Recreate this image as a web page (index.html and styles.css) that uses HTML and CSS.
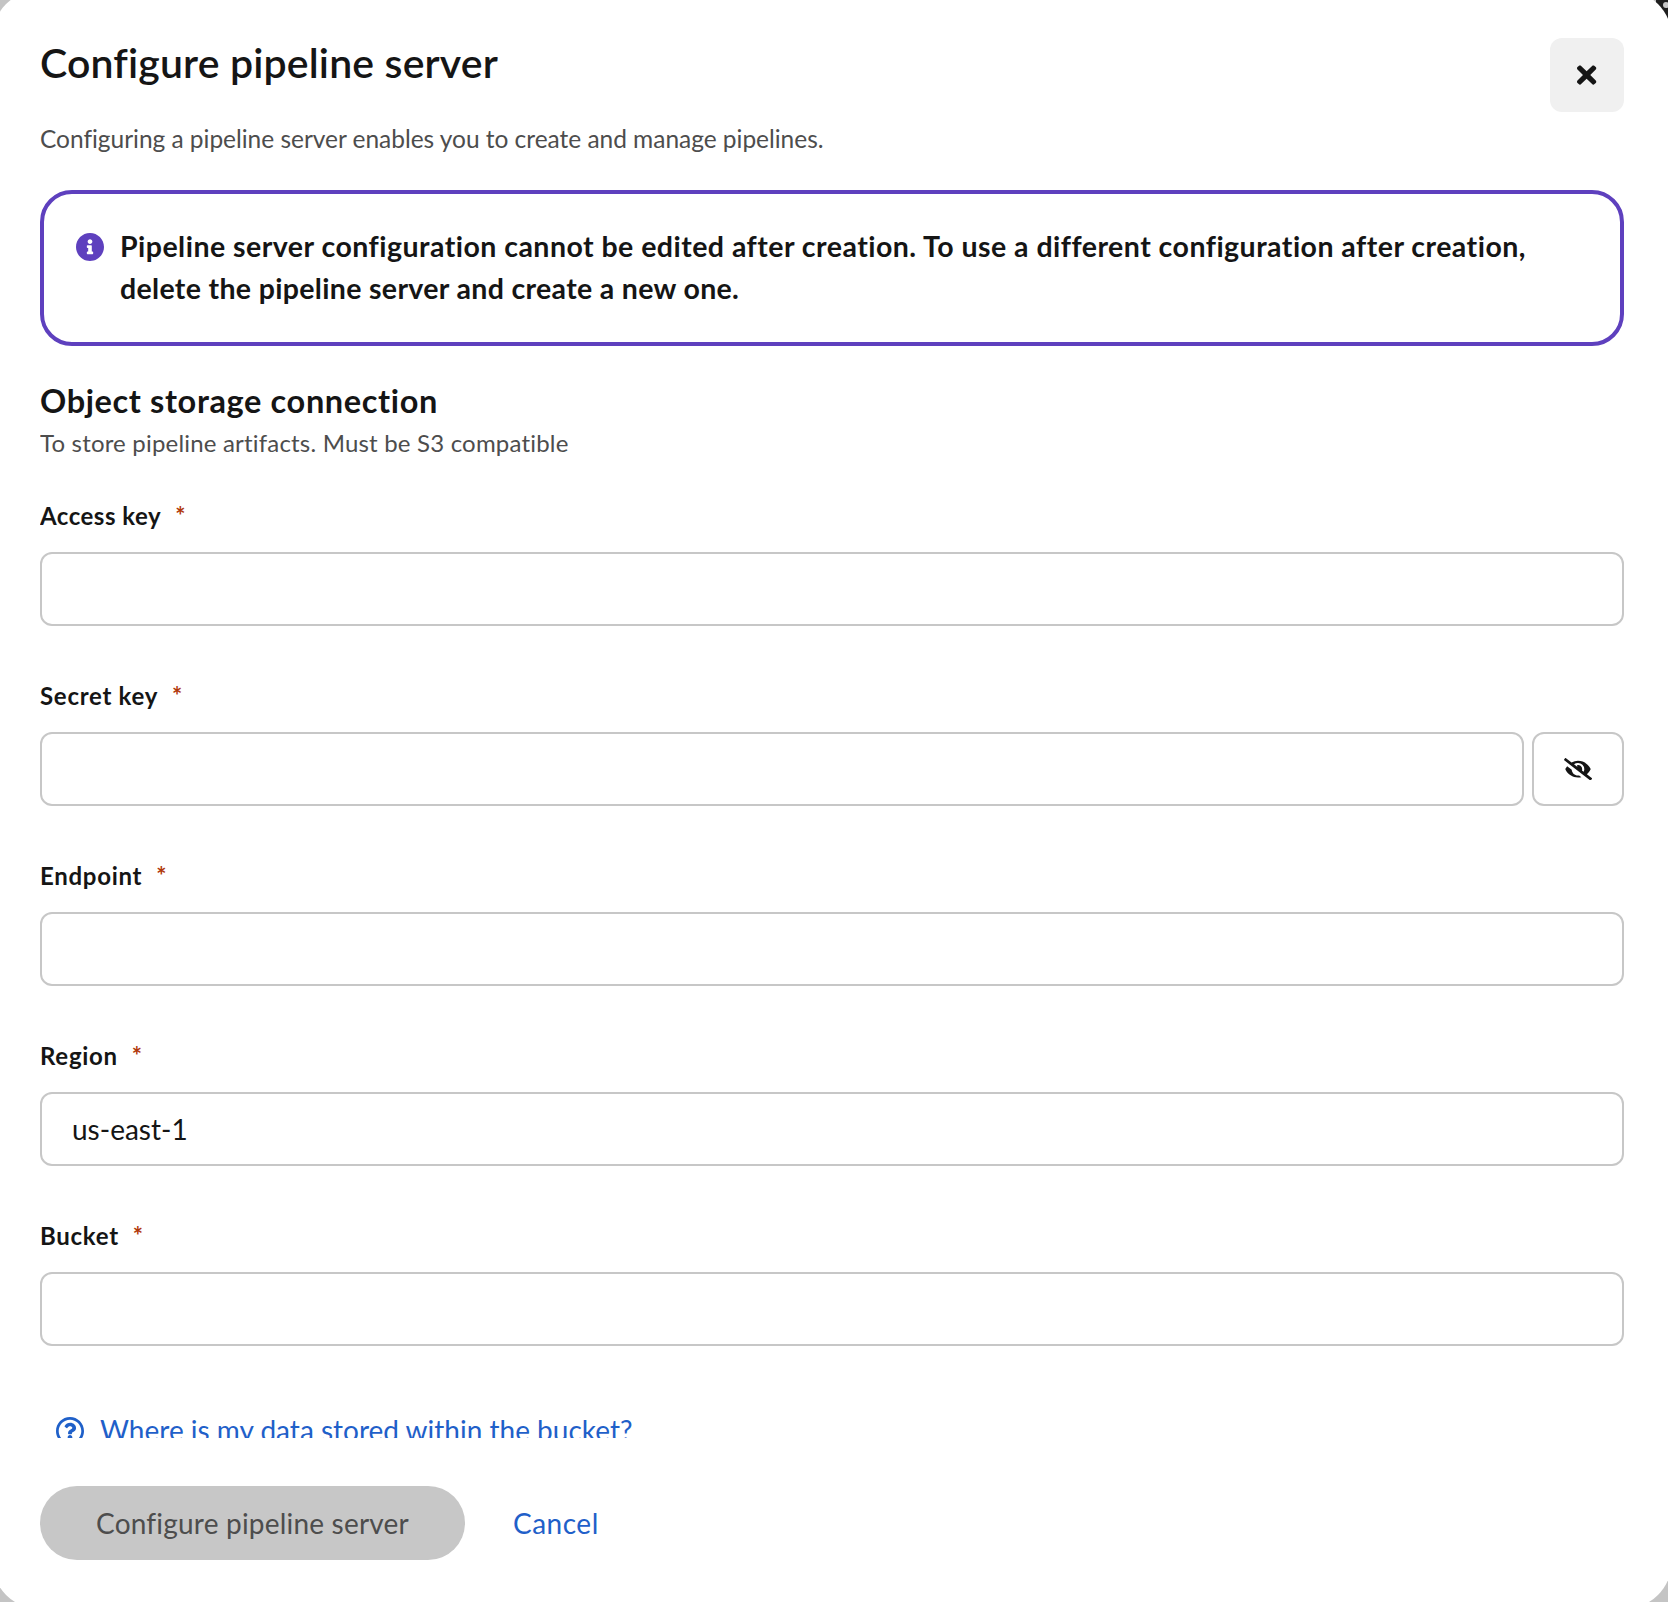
FILE: index.html
```html
<!DOCTYPE html>
<html lang="en">
<head>
<meta charset="utf-8">
<title>Configure pipeline server</title>
<link rel="stylesheet" href="styles.css">
</head>
<body>
<svg class="page-corner" viewBox="0 0 20 30" aria-hidden="true">
  <path class="page-corner-bar" d="M8 0H20V30H8z"/>
  <circle class="page-corner-dot" cx="18" cy="5" r="3"/>
</svg>
<main class="modal" role="dialog" aria-labelledby="modal-title">
  <header class="modal-header">
    <div>
      <h1 class="modal-title" id="modal-title">Configure pipeline server</h1>
      <p class="modal-description">Configuring a pipeline server enables you to create and manage pipelines.</p>
    </div>
    <button class="close-button" type="button" aria-label="Close">
      <svg class="close-icon" viewBox="0 0 352 512"><path d="M242.72 256l100.07-100.07c12.28-12.28 12.28-32.19 0-44.48l-22.24-22.24c-12.28-12.28-32.19-12.28-44.48 0L176 189.28 75.93 89.21c-12.28-12.28-32.19-12.28-44.48 0L9.21 111.45c-12.28 12.28-12.28 32.19 0 44.48L109.28 256 9.21 356.07c-12.28 12.28-12.28 32.19 0 44.48l22.24 22.24c12.28 12.28 32.2 12.28 44.48 0L176 322.72l100.07 100.07c12.28 12.28 32.2 12.28 44.48 0l22.24-22.24c12.28-12.28 12.28-32.19 0-44.48L242.72 256z"/></svg>
    </button>
  </header>

  <div class="modal-body">
    <section class="alert">
      <svg class="icon alert-icon" viewBox="8 8 496 496"><path d="M256 8C119.043 8 8 119.083 8 256c0 136.997 111.043 248 248 248s248-111.003 248-248C504 119.083 392.957 8 256 8zm0 110c23.196 0 42 18.804 42 42s-18.804 42-42 42-42-18.804-42-42 18.804-42 42-42zm56 254c0 6.627-5.373 12-12 12h-88c-6.627 0-12-5.373-12-12v-24c0-6.627 5.373-12 12-12h12v-64h-12c-6.627 0-12-5.373-12-12v-24c0-6.627 5.373-12 12-12h64c6.627 0 12 5.373 12 12v100h12c6.627 0 12 5.373 12 12v24z"/></svg>
      <p class="alert-text">Pipeline server configuration cannot be edited after creation. To use a different configuration after creation,<br><span class="alert-line">delete the pipeline server and create a new one.</span></p>
    </section>

    <h2 class="section-title">Object storage connection</h2>
    <p class="section-description">To store pipeline artifacts. Must be S3 compatible</p>

    <form class="fields">
      <div class="field">
        <label class="label label-tight" for="access">Access key<span class="required">*</span></label>
        <input class="control" id="access" type="text">
      </div>
      <div class="field">
        <label class="label" for="secret">Secret key<span class="required">*</span></label>
        <div class="input-group">
          <input class="control" id="secret" type="password">
          <button class="reveal-button" type="button" aria-label="Show secret key">
            <svg class="eye-icon" viewBox="0 0 640 512"><path d="M320 400c-75.85 0-137.25-58.71-142.9-133.11L72.2 185.82c-13.79 17.3-26.48 35.59-36.72 55.59a32.35 32.35 0 0 0 0 29.19C89.71 376.41 197.07 448 320 448c26.91 0 52.87-4 77.89-10.46L346 397.39a144.13 144.13 0 0 1-26 2.61zm313.82 58.1l-110.55-85.44a331.25 331.25 0 0 0 81.25-102.07 32.35 32.35 0 0 0 0-29.19C550.29 135.59 442.93 64 320 64a308.15 308.15 0 0 0-147.32 37.7L45.46 3.37A16 16 0 0 0 23 6.18L3.37 31.45A16 16 0 0 0 6.18 53.9l588.36 454.73a16 16 0 0 0 22.46-2.81l19.64-25.27a16 16 0 0 0-2.82-22.45zm-183.72-142l-39.3-30.38A94.75 94.75 0 0 0 416 256a94.76 94.76 0 0 0-121.31-92.21A47.65 47.65 0 0 1 304 192a46.64 46.64 0 0 1-1.54 10l-73.61-56.89A142.31 142.31 0 0 1 320 112a143.92 143.92 0 0 1 144 144c0 21.63-5.29 41.79-13.9 60.11z"/></svg>
          </button>
        </div>
      </div>
      <div class="field">
        <label class="label" for="endpoint">Endpoint<span class="required">*</span></label>
        <input class="control" id="endpoint" type="text">
      </div>
      <div class="field">
        <label class="label" for="region">Region<span class="required">*</span></label>
        <input class="control" id="region" type="text" value="us-east-1">
      </div>
      <div class="field">
        <label class="label" for="bucket">Bucket<span class="required">*</span></label>
        <input class="control" id="bucket" type="text">
      </div>
    </form>

    <a class="help-link">
      <svg class="icon help-icon" viewBox="8 8 496 496"><path d="M256 8C119.043 8 8 119.083 8 256c0 136.997 111.043 248 248 248s248-111.003 248-248C504 119.083 392.957 8 256 8zm0 448c-110.532 0-200-89.431-200-200 0-110.495 89.472-200 200-200 110.491 0 200 89.471 200 200 0 110.53-89.431 200-200 200zm107.244-255.2c0 67.052-72.421 68.084-72.421 92.863V300c0 6.627-5.373 12-12 12h-45.647c-6.627 0-12-5.373-12-12v-8.659c0-35.745 27.1-50.034 47.579-61.516 17.561-9.845 28.324-16.541 28.324-29.579 0-17.246-21.999-28.693-39.784-28.693-23.189 0-33.894 10.977-48.942 29.969-4.057 5.12-11.46 6.071-16.666 2.124l-27.824-21.098c-5.107-3.872-6.251-11.066-2.644-16.363C184.846 131.491 214.94 112 261.794 112c49.071 0 101.45 38.304 101.45 88.8zM298 368c0 23.159-18.841 42-42 42s-42-18.841-42-42 18.841-42 42-42 42 18.841 42 42z"/></svg>
      <span>Where is my data stored within the bucket?</span>
    </a>
  </div>

  <footer class="modal-footer">
    <button class="button button-disabled" type="button">Configure pipeline server</button>
    <button class="button button-link" type="button">Cancel</button>
  </footer>
</main>
</body>
</html>
```
FILE: styles.css
```css
* {
  box-sizing: border-box;
}

body {
  margin: 0;
  height: 1602px;
  overflow: hidden;
  display: flow-root;
  background: #c4c4c4;
  color: #151515;
  font-family: Lato, "Liberation Sans", sans-serif;
  font-variant-ligatures: none;
}

h1, h2, p {
  margin: 0;
}

svg {
  display: block;
  flex: none;
  fill: currentColor;
}

button, input {
  font: inherit;
  color: inherit;
}

/* Part of the page that shows past the modal's rounded corner */
.page-corner {
  position: absolute;
  top: 0;
  right: 0;
  width: 20px;
  height: 30px;
}

.page-corner-bar {
  fill: #1f1f1f;
}

.page-corner-dot {
  fill: #c7c7c7;
}

.modal {
  position: relative;
  display: flex;
  flex-direction: column;
  height: 1619px;
  margin: -10px -4px 0 -8px;
  padding: 48px;
  border-radius: 48px;
  background: #fff;
}

.modal-header {
  display: flex;
  justify-content: space-between;
  align-items: flex-start;
  height: 152px;
}

.modal-title {
  font-size: 41px;
  font-weight: 600;
  line-height: 50px;
  letter-spacing: 0.15px;
}

.modal-description {
  margin-top: 33px;
  color: #4d4d4d;
  font-size: 24.5px;
  line-height: 36px;
  letter-spacing: -0.03px;
}

.close-button {
  display: flex;
  align-items: center;
  justify-content: center;
  width: 74px;
  height: 74px;
  padding: 0;
  border: 0;
  border-radius: 12px;
  background: #f0f0f0;
}

.close-icon {
  width: 19.25px;
  height: 28px;
}

.modal-body {
  height: 1248px;
  overflow: hidden;
}

.alert {
  display: flex;
  gap: 16px;
  height: 156px;
  padding: 31px 32px;
  border: 4px solid #5e40be;
  border-radius: 32px;
}

.icon {
  width: 28px;
  height: 28px;
  margin-top: 8px;
}

.alert-icon {
  color: #5e40be;
}

.alert-text {
  font-size: 28.5px;
  font-weight: 700;
  line-height: 42px;
  letter-spacing: 0.47px;
  white-space: nowrap;
}

.alert-line {
  letter-spacing: 0.33px;
}

.section-title {
  margin-top: 34px;
  font-size: 32.5px;
  font-weight: 700;
  line-height: 42px;
  letter-spacing: 0.63px;
}

.section-description {
  margin-top: 3px;
  color: #4d4d4d;
  font-size: 24px;
  line-height: 36px;
  letter-spacing: 0.19px;
}

.fields {
  display: grid;
  gap: 52px;
  margin-top: 37px;
}

.field {
  display: grid;
  gap: 18px;
}

.label {
  font-size: 24px;
  font-weight: 700;
  line-height: 36px;
  letter-spacing: 0.72px;
}

.label-tight {
  letter-spacing: 0.5px;
}

.required {
  margin-left: 14px;
  color: #b1380b;
}

.control {
  width: 100%;
  min-width: 0;
  height: 74px;
  padding: 0 30px;
  border: 2px solid #c7c7c7;
  border-radius: 12px;
  background: #fff;
  font-size: 28px;
}

.input-group {
  display: flex;
  gap: 8px;
}

.reveal-button {
  display: flex;
  flex: none;
  align-items: center;
  justify-content: center;
  width: 92px;
  height: 74px;
  padding: 0;
  border: 2px solid #c7c7c7;
  border-radius: 12px;
  background: #fff;
}

.eye-icon {
  width: 28px;
  height: 22.4px;
}

.help-link {
  display: flex;
  gap: 16px;
  margin-top: 63px;
  padding-left: 16px;
  color: #1f60c9;
  font-size: 28px;
  line-height: 42px;
}

.modal-footer {
  display: flex;
  margin-top: 48px;
}

.button {
  height: 74px;
  padding: 0 0 1px;
  border: 0;
  border-radius: 37px;
  background: none;
  font-size: 28px;
  letter-spacing: 0.2px;
}

.button-disabled {
  width: 425px;
  background: #c7c7c7;
  color: #4d4d4d;
}

.button-link {
  padding-left: 48px;
  color: #1f60c9;
  letter-spacing: 0.5px;
}
```
